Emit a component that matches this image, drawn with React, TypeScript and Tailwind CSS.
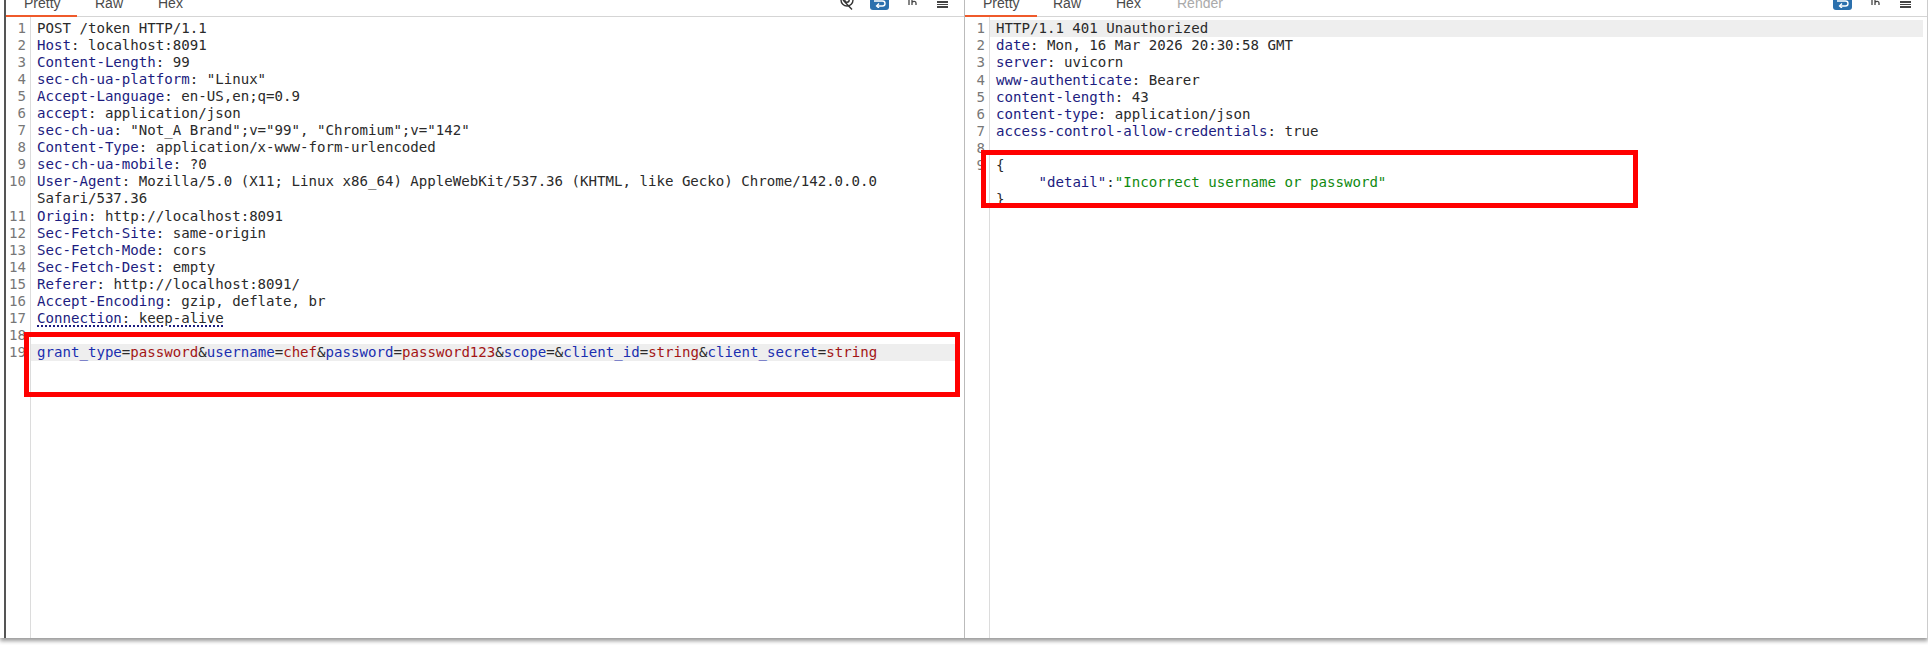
import React from "react";

type Seg = { t: string; c?: string };
type Row = { n?: number; segs: Seg[]; active?: boolean; dotted?: boolean };

const KEY = "text-[#1c1c80]";
const BLUE = "text-[#1a2fb0]";
const RED = "text-[#a31515]";
const GREEN = "text-[#108a10]";

function header(n: number, k: string, v: string, dotted = false): Row {
  return { n, dotted, segs: [{ t: k, c: KEY }, { t: ": " + v }] };
}

const requestRows: Row[] = [
  { n: 1, segs: [{ t: "POST /token HTTP/1.1" }] },
  header(2, "Host", "localhost:8091"),
  header(3, "Content-Length", "99"),
  header(4, "sec-ch-ua-platform", '"Linux"'),
  header(5, "Accept-Language", "en-US,en;q=0.9"),
  header(6, "accept", "application/json"),
  header(7, "sec-ch-ua", '"Not_A Brand";v="99", "Chromium";v="142"'),
  header(8, "Content-Type", "application/x-www-form-urlencoded"),
  header(9, "sec-ch-ua-mobile", "?0"),
  header(10, "User-Agent", "Mozilla/5.0 (X11; Linux x86_64) AppleWebKit/537.36 (KHTML, like Gecko) Chrome/142.0.0.0"),
  { segs: [{ t: "Safari/537.36" }] },
  header(11, "Origin", "http://localhost:8091"),
  header(12, "Sec-Fetch-Site", "same-origin"),
  header(13, "Sec-Fetch-Mode", "cors"),
  header(14, "Sec-Fetch-Dest", "empty"),
  header(15, "Referer", "http://localhost:8091/"),
  header(16, "Accept-Encoding", "gzip, deflate, br"),
  header(17, "Connection", "keep-alive", true),
  { n: 18, segs: [] },
  {
    n: 19,
    active: true,
    segs: [
      { t: "grant_type", c: BLUE },
      { t: "=" },
      { t: "password", c: RED },
      { t: "&" },
      { t: "username", c: BLUE },
      { t: "=" },
      { t: "chef", c: RED },
      { t: "&" },
      { t: "password", c: BLUE },
      { t: "=" },
      { t: "password123", c: RED },
      { t: "&" },
      { t: "scope", c: BLUE },
      { t: "=&" },
      { t: "client_id", c: BLUE },
      { t: "=" },
      { t: "string", c: RED },
      { t: "&" },
      { t: "client_secret", c: BLUE },
      { t: "=" },
      { t: "string", c: RED },
    ],
  },
];

const responseRows: Row[] = [
  { n: 1, active: true, segs: [{ t: "HTTP/1.1 401 Unauthorized" }] },
  header(2, "date", "Mon, 16 Mar 2026 20:30:58 GMT"),
  header(3, "server", "uvicorn"),
  header(4, "www-authenticate", "Bearer"),
  header(5, "content-length", "43"),
  header(6, "content-type", "application/json"),
  header(7, "access-control-allow-credentials", "true"),
  { n: 8, segs: [] },
  { n: 9, segs: [{ t: "{" }] },
  { segs: [{ t: "     " }, { t: '"detail"', c: KEY }, { t: ":" }, { t: '"Incorrect username or password"', c: GREEN }] },
  { segs: [{ t: "}" }] },
];

function Tabs({ names, underline }: { names: { label: string; className: string }[]; underline: string }) {
  return (
    <div className="relative h-[17px] flex-1 overflow-hidden">
      <div className="-mt-[5px] flex text-[14px] leading-[17px] text-[#4a4a4a]">
        {names.map((n) => (
          <span key={n.label} className={n.className}>
            {n.label}
          </span>
        ))}
      </div>
      <div className={`absolute bottom-0 left-0 h-[2px] bg-[#ef5a2b] ${underline}`} />
    </div>
  );
}

function WrapIcon() {
  return (
    <div className="flex h-[18px] w-[19px] items-end justify-center rounded-[3px] bg-[#2b70ad] pb-[2px]">
      <svg width="13" height="8" viewBox="0 0 13 8" fill="none" stroke="white" strokeWidth="1.4">
        <path d="M1 1h8.5a2.4 2.4 0 0 1 0 5H4" />
        <path d="M6 3.6L3.6 6 6 8" />
      </svg>
    </div>
  );
}

function NewlineIcon() {
  return (
    <svg width="10" height="6" viewBox="0 0 10 6" fill="none" stroke="#444" strokeWidth="1.3">
      <path d="M1 0v5" />
      <path d="M4 0v5M4 2.5c1-1.5 4-1.5 4 .5v2" />
    </svg>
  );
}

function MenuIcon() {
  return (
    <div className="flex w-[11px] flex-col gap-[1px] pt-[1px]">
      <div className="h-[1.5px] bg-[#444]" />
      <div className="h-[1.5px] bg-[#444]" />
      <div className="h-[1.5px] bg-[#444]" />
    </div>
  );
}

function EyeOffIcon() {
  return (
    <svg width="16" height="10" viewBox="0 0 16 10" fill="none" stroke="#333" strokeWidth="1.4">
      <circle cx="8" cy="0" r="6" />
      <circle cx="8" cy="0" r="2.2" />
      <path d="M4 0L13 9.5" />
    </svg>
  );
}

function Toolbar({ children }: { children: React.ReactNode }) {
  return <div className="flex h-[10px] items-start overflow-hidden">{children}</div>;
}

function Editor({ rows, top }: { rows: Row[]; top: string }) {
  return (
    <div className="relative flex-1 font-['DejaVu_Sans_Mono',monospace] text-[14.1px] leading-[17.05px] text-[#2a2a2a]">
      <div className="absolute top-0 bottom-0 left-0 w-[25px] border-r border-[#dcdcdc]" />
      <div className={`relative ${top}`}>
        {rows.map((r, i) => (
          <div key={i} className="flex h-[17.05px]">
            <div className="w-[25px] shrink-0 pr-[5px] text-right text-[#777]">{r.n ?? ""}</div>
            <div className={`mr-[4px] flex-1 whitespace-pre pl-[6px] ${r.active ? "bg-[#eeeeee]" : ""}`}>
              <span className={r.dotted ? "underline decoration-dotted decoration-[#1c1c80] decoration-2 underline-offset-[3px]" : ""}>
                {r.segs.map((s, j) => (
                  <span key={j} className={s.c}>
                    {s.t}
                  </span>
                ))}
              </span>
            </div>
          </div>
        ))}
      </div>
    </div>
  );
}

export default function App() {
  return (
    <div className="relative h-[645px] w-[1928px] overflow-hidden bg-white font-['Liberation_Sans',sans-serif]">
      <div className="flex h-[638px] pl-[4px] shadow-[0_3px_4px_rgba(0,0,0,0.4)]">
        {/* request */}
        <div className="flex w-[961px] flex-col border-l-2 border-r border-l-[#555] border-r-[#bbb]">
          <div className="flex h-[17px] items-start border-b border-[#d5d5d5]">
            <Tabs
              underline="w-[71px]"
              names={[
                { label: "Pretty", className: "ml-[18px] w-[71px]" },
                { label: "Raw", className: "w-[63px]" },
                { label: "Hex", className: "" },
              ]}
            />
            <Toolbar>
              <div className="mr-[15px]"><EyeOffIcon /></div>
              <div className="-mt-[8px] mr-[19px]"><WrapIcon /></div>
              <div className="mr-[19px]"><NewlineIcon /></div>
              <div className="mr-[16px]"><MenuIcon /></div>
            </Toolbar>
          </div>
          <Editor rows={requestRows} top="pt-[3px]" />
        </div>
        {/* response */}
        <div className="flex flex-1 flex-col border-r border-[#ccc]">
          <div className="flex h-[17px] items-start border-b border-[#d5d5d5]">
            <Tabs
              underline="w-[72px]"
              names={[
                { label: "Pretty", className: "ml-[18px] w-[70px]" },
                { label: "Raw", className: "w-[63px]" },
                { label: "Hex", className: "w-[61px]" },
                { label: "Render", className: "text-[#aaa]" },
              ]}
            />
            <Toolbar>
              <div className="-mt-[8px] mr-[19px]"><WrapIcon /></div>
              <div className="mr-[19px]"><NewlineIcon /></div>
              <div className="mr-[16px]"><MenuIcon /></div>
            </Toolbar>
          </div>
          <Editor rows={responseRows} top="pt-[3.4px]" />
        </div>
      </div>
      {/* red annotation boxes drawn over the screenshot */}
      <div className="absolute top-[332px] left-[24px] h-[65px] w-[936px] border-[5px] border-[#ff0000]" />
      <div className="absolute top-[150px] left-[981px] h-[58px] w-[657px] border-[5px] border-[#ff0000]" />
    </div>
  );
}
